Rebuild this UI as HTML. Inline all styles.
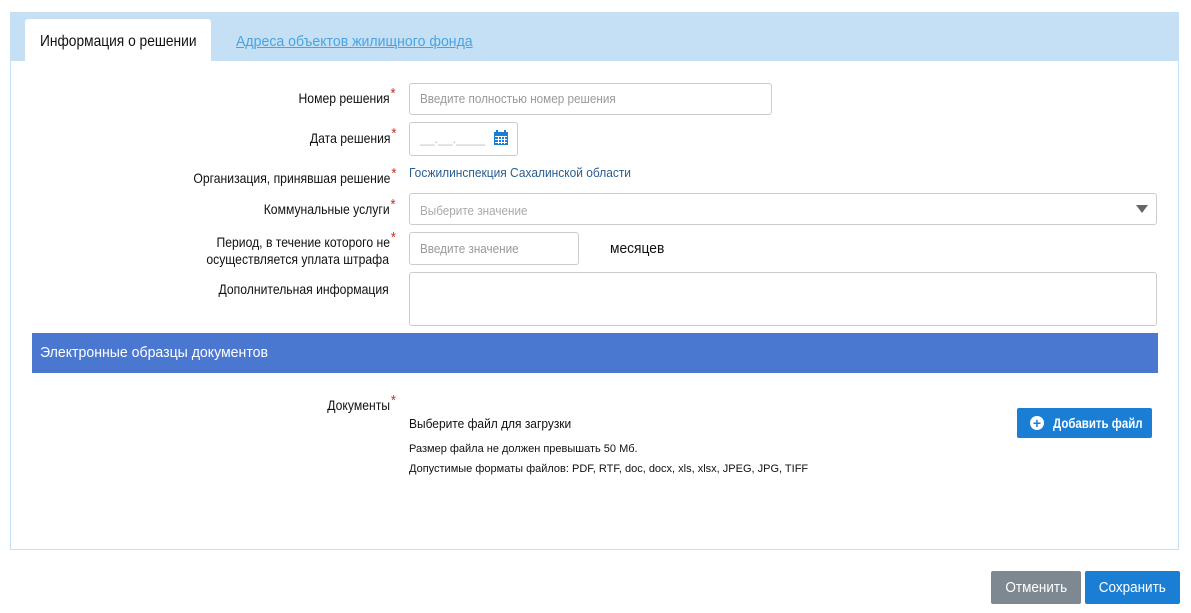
<!DOCTYPE html>
<html><head><meta charset="utf-8"><style>
body{margin:0;width:1191px;height:613px;background:#fff;font-family:"Liberation Sans",sans-serif;position:relative;overflow:hidden;color:#222}
.a{position:absolute}
.panel{left:10px;top:12px;width:1167px;height:536px;border:1px solid #c5e0f5;}
.band{left:11px;top:13px;width:1167px;height:48px;background:#c5e0f5}
.tab{left:25px;top:19px;width:186px;height:42px;background:#fff;border-radius:3px 3px 0 0}
.lbl{right:795px;font-size:14px;text-align:right;color:#111;line-height:16px;transform:scaleX(.87);transform-origin:right top;white-space:nowrap}
.req{color:#c0392b;font-size:15px;position:relative;top:-5px;margin-left:1px}
.in{border:1px solid #ccc;border-radius:3px;background:#fff;font-size:13px;color:#999;box-sizing:border-box;padding-left:10px}
.btn{color:#fff;font-size:15px;text-align:center;border-radius:2px}
.sx{transform-origin:left top;white-space:nowrap}
</style></head><body>
<div class="a panel"></div>
<div class="a band"></div>
<div class="a tab"></div>
<div class="a sx" style="left:40px;top:33px;font-size:16px;color:#111;transform:scaleX(.86)">Информация о решении</div>
<div class="a sx" style="left:236px;top:33px;font-size:15px;color:#4aa3df;text-decoration:underline;transform:scaleX(.94)">Адреса объектов жилищного фонда</div>

<div class="a lbl" style="top:90px">Номер решения<span class="req">*</span></div>
<div class="a in" style="left:409px;top:83px;width:363px;height:32px;line-height:30px"><span class="sx" style="display:inline-block;transform:scaleX(.9)">Введите полностью номер решения</span></div>

<div class="a lbl" style="top:130px">Дата решения<span class="req">*</span></div>
<div class="a in" style="left:409px;top:122px;width:109px;height:34px;line-height:32px;color:#bbb">__.__.____</div>
<svg class="a" style="left:493px;top:130px" width="16" height="16" viewBox="0 0 16 16"><rect x="1" y="2" width="14" height="13" fill="#1a7fd4"/><rect x="3" y="0" width="2" height="4" fill="#1a7fd4"/><rect x="11" y="0" width="2" height="4" fill="#1a7fd4"/><g fill="#fff"><rect x="2" y="6" width="12" height="1"/><rect x="2" y="9" width="12" height="1"/><rect x="2" y="12" width="12" height="1"/><rect x="5" y="6" width="1" height="8"/><rect x="8" y="6" width="1" height="8"/><rect x="11" y="6" width="1" height="8"/></g></svg>

<div class="a lbl" style="top:170px">Организация, принявшая решение<span class="req">*</span></div>
<div class="a sx" style="left:409px;top:165px;font-size:13px;color:#2a5d8f;transform:scaleX(.92)">Госжилинспекция Сахалинской области</div>

<div class="a lbl" style="top:201px">Коммунальные услуги<span class="req">*</span></div>
<div class="a in" style="left:409px;top:193px;width:748px;height:32px;line-height:34px;color:#aaa"><span class="sx" style="display:inline-block;transform:scaleX(.9)">Выберите значение</span></div>
<div class="a" style="left:1136px;top:205px;width:0;height:0;border-left:6px solid transparent;border-right:6px solid transparent;border-top:8px solid #666"></div>

<div class="a lbl" style="top:234px">Период, в течение которого не<span class="req">*</span><br><span style="margin-right:8px">осуществляется уплата штрафа</span></div>
<div class="a in" style="left:409px;top:232px;width:170px;height:33px;line-height:31px"><span class="sx" style="display:inline-block;transform:scaleX(.9)">Введите значение</span></div>
<div class="a sx" style="left:610px;top:240px;font-size:15px;color:#111;transform:scaleX(.92)">месяцев</div>

<div class="a lbl" style="top:281px"><span style="margin-right:8px">Дополнительная информация</span></div>
<div class="a in" style="left:409px;top:272px;width:748px;height:54px"></div>

<div class="a" style="left:32px;top:333px;width:1126px;height:40px;background:#4a78d0"></div>
<div class="a sx" style="left:40px;top:344px;color:#fff;font-size:15px;transform:scaleX(.94)">Электронные образцы документов</div>

<div class="a lbl" style="top:397px">Документы<span class="req">*</span></div>
<div class="a sx" style="left:409px;top:416px;font-size:13px;color:#111;transform:scaleX(.92)">Выберите файл для загрузки</div>
<div class="a" style="left:409px;top:443px;font-size:11px;color:#111">Размер файла не должен превышать 50 Мб.</div>
<div class="a" style="left:409px;top:463px;font-size:11px;color:#111">Допустимые форматы файлов: PDF, RTF, doc, docx, xls, xlsx, JPEG, JPG, TIFF</div>
<div class="a btn" style="left:1017px;top:408px;width:135px;height:30px;background:#1a7fd4"></div>
<div class="a" style="left:1030px;top:416px;width:14px;height:14px;border-radius:50%;background:#fff;color:#1a7fd4;font-size:14px;line-height:14px;font-weight:bold;text-align:center">+</div>
<div class="a sx" style="left:1053px;top:415px;color:#fff;font-size:14px;font-weight:bold;transform:scaleX(.82)">Добавить файл</div>

<div class="a btn" style="left:991px;top:571px;width:90px;height:33px;line-height:33px;background:#7d8890"><span style="display:inline-block;transform:scaleX(.9)">Отменить</span></div>
<div class="a btn" style="left:1085px;top:571px;width:95px;height:33px;line-height:33px;background:#1a7fd4"><span style="display:inline-block;transform:scaleX(.9)">Сохранить</span></div>
</body></html>
